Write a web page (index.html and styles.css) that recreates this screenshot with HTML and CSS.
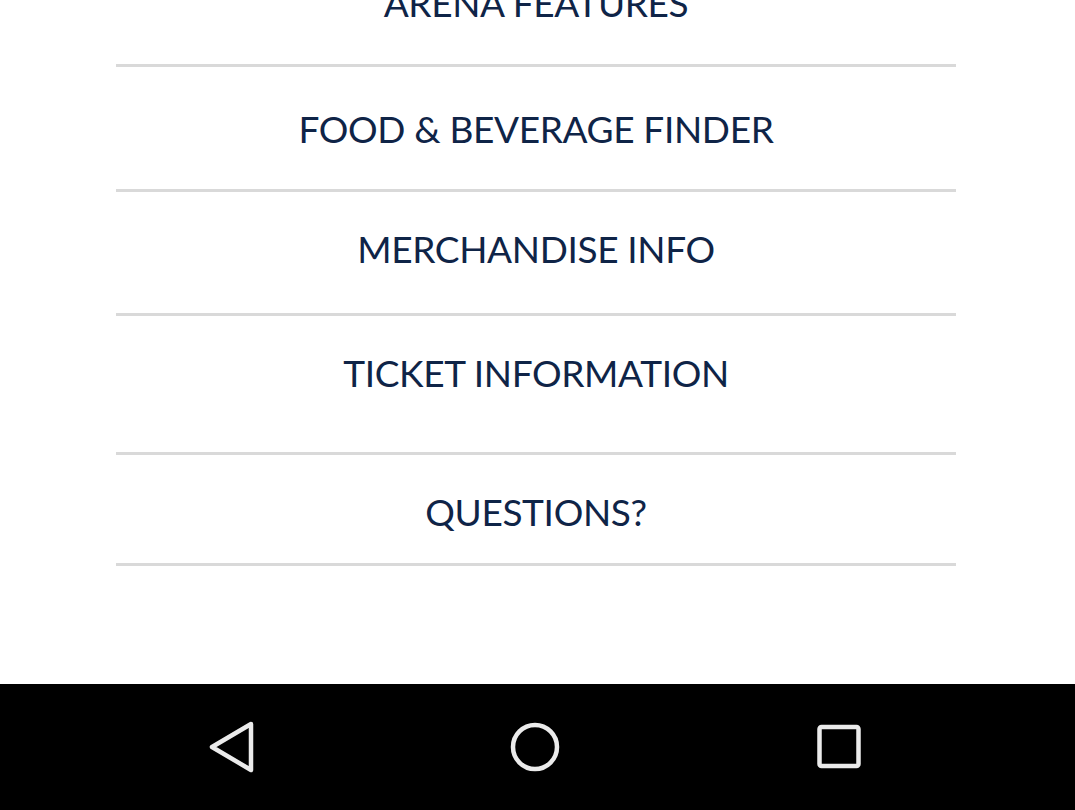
FILE: index.html
```html
<!DOCTYPE html>
<html>
<head>
<meta charset="utf-8">
<link rel="stylesheet" href="styles.css">
</head>
<body>
<div class="screen">
  <main class="content">
    <ul class="menu">
      <li class="item item-arena"><span class="label">ARENA FEATURES</span></li>
      <li class="item item-food"><span class="label">FOOD &amp; BEVERAGE FINDER</span></li>
      <li class="item item-merch"><span class="label">MERCHANDISE INFO</span></li>
      <li class="item item-ticket"><span class="label">TICKET INFORMATION</span></li>
      <li class="item item-questions"><span class="label">QUESTIONS?</span></li>
    </ul>
  </main>
  <nav class="navbar">
    <svg class="nav-icon" width="60" height="60" viewBox="0 0 60 60">
      <path d="M50 7 L11 30 L50 53 Z" fill="none" stroke="#ebebeb" stroke-width="4.5" stroke-linejoin="round"/>
    </svg>
    <svg class="nav-icon" width="60" height="60" viewBox="0 0 60 60">
      <circle cx="30" cy="30" r="22" fill="none" stroke="#ebebeb" stroke-width="4.5"/>
    </svg>
    <svg class="nav-icon" width="60" height="60" viewBox="0 0 60 60">
      <rect x="10.5" y="10" width="39" height="39" rx="2" fill="none" stroke="#ebebeb" stroke-width="4.5"/>
    </svg>
  </nav>
</div>
</body>
</html>
```

FILE: styles.css
```css
* { box-sizing: border-box; }
html, body {
  margin: 0;
  padding: 0;
  background: #ffffff;
}
.screen {
  width: 1075px;
  height: 810px;
  display: flex;
  flex-direction: column;
  overflow: hidden;
}
.content {
  flex: 1;
  overflow: hidden;
}
.menu {
  list-style: none;
  margin: 0 119px 0 116px;
  padding: 0;
}
.item {
  display: flex;
  justify-content: center;
  align-items: flex-start;
  border-bottom: 3px solid #d9d9d9;
  font-family: Lato, "Open Sans", sans-serif;
  font-size: 37px;
  line-height: 46px;
  letter-spacing: -0.35px;
  color: #0f2447;
  white-space: nowrap;
}
.item-arena {
  height: 87px;
  padding-top: 0;
  margin-top: -20px;
}
.item-food { height: 125px; padding-top: 39px; }
.item-merch { height: 124px; padding-top: 34px; }
.item-ticket { height: 139px; padding-top: 34px; }
.item-questions { height: 111px; padding-top: 34px; }

.navbar {
  height: 126px;
  flex: none;
  background: #000000;
  display: flex;
  align-items: center;
  gap: 244px;
  padding: 0 0 0 201px;
}
.nav-icon { display: block; }
```
